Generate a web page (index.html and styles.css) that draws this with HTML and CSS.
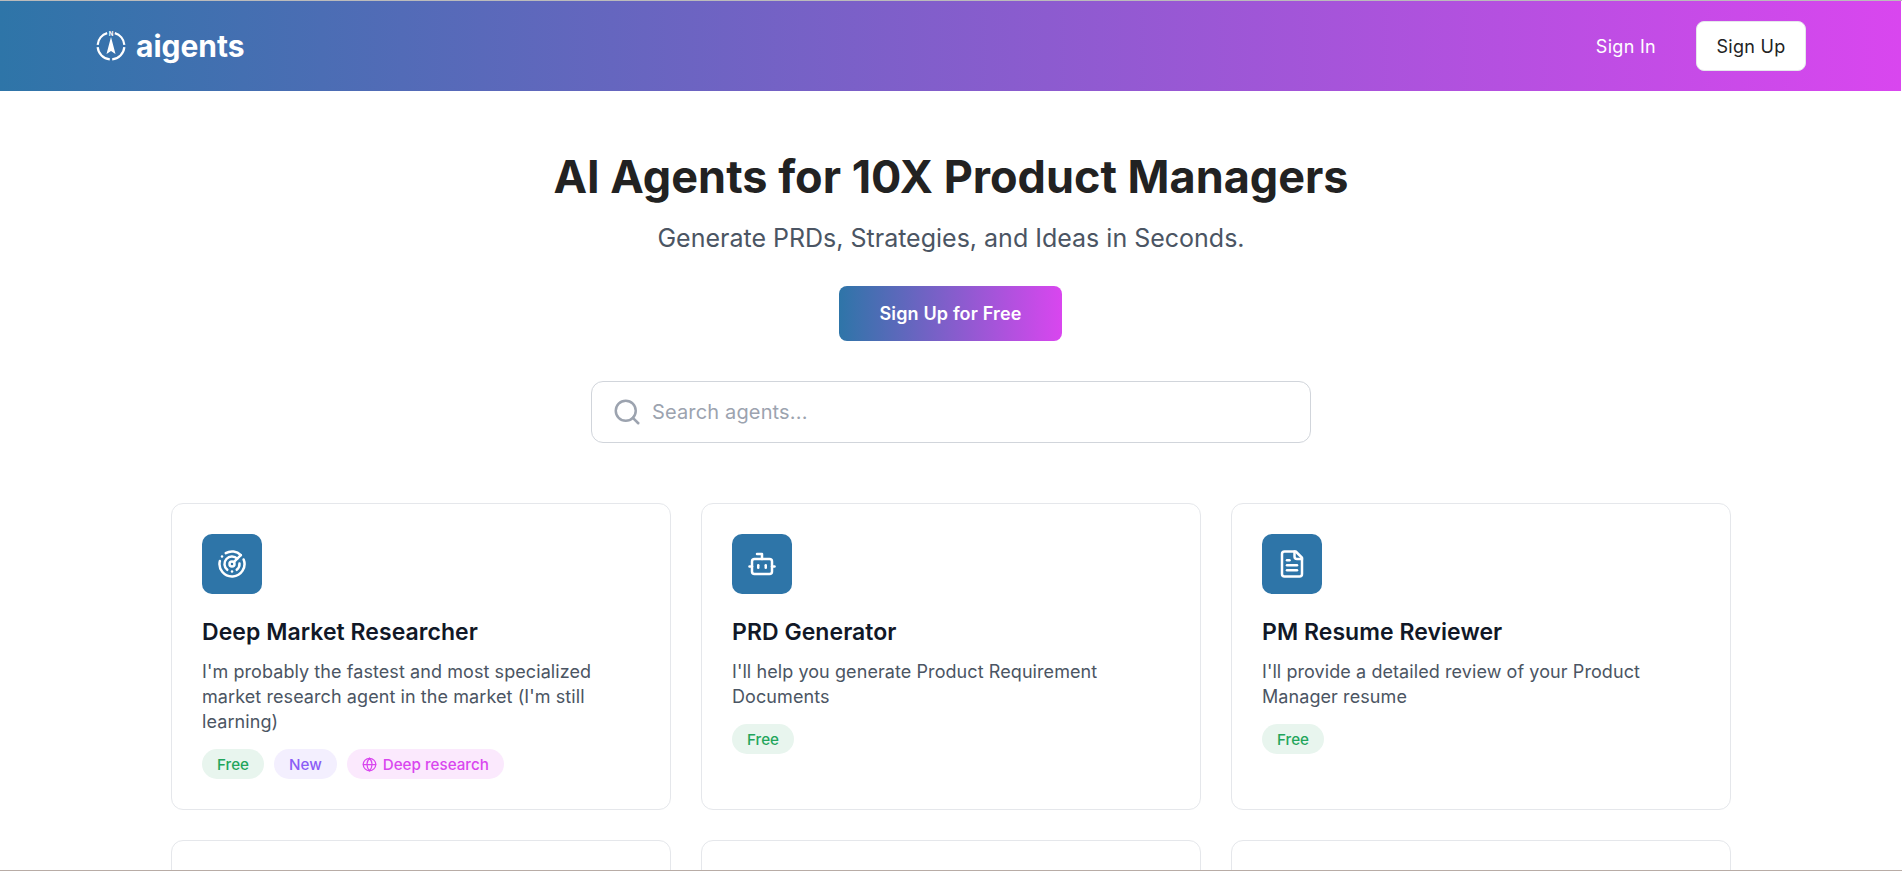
FILE: index.html
```html
<!DOCTYPE html>
<html lang="en">
<head>
  <meta charset="UTF-8" />
  <meta name="viewport" content="width=device-width, initial-scale=1.0"/>
  <title>aigents</title>
  <link rel="stylesheet" href="styles.css">
</head>
<body>
  <header class="topbar">
    <a class="brand" href="#">
      <svg class="brand-icon" viewBox="0 0 30 30" fill="none" stroke="currentColor" stroke-width="2.2">
        <path d="M18.8 2.15A13.4 13.4 0 0 1 28.35 13.8"/>
        <path d="M28.35 16.2A13.4 13.4 0 0 1 16.2 28.35"/>
        <path d="M13.8 28.35A13.4 13.4 0 0 1 1.65 16.2"/>
        <path d="M1.65 13.8A13.4 13.4 0 0 1 11.2 2.15"/>
        <path d="M15 6L19.5 23L15 20L10.5 23Z" fill="currentColor" stroke="none"/>
        <text class="brand-n" x="15" y="4.6">N</text>
      </svg>
      <span>aigents</span>
    </a>
    <nav class="topbar-nav">
      <a class="signin" href="#">Sign In</a>
      <a class="signup" href="#">Sign Up</a>
    </nav>
  </header>

  <section class="hero">
    <h1>AI Agents for 10X Product Managers</h1>
    <p>Generate PRDs, Strategies, and Ideas in Seconds.</p>
    <a class="cta" href="#">Sign Up for Free</a>
    <div class="search">
      <svg class="search-icon" viewBox="0 0 24 24" fill="none" stroke="currentColor" stroke-width="2" stroke-linecap="round" stroke-linejoin="round">
        <circle cx="11" cy="11" r="8"/>
        <path d="m21 21-4.3-4.3"/>
      </svg>
      <input type="text" placeholder="Search agents..."/>
    </div>
  </section>

  <main class="grid">
    <article class="card">
      <div class="card-icon">
        <svg viewBox="0 0 24 24" fill="none" stroke="currentColor" stroke-width="2" stroke-linecap="round" stroke-linejoin="round">
          <path d="M19.07 4.93A10 10 0 0 0 6.99 3.34"/>
          <path d="M4 6h.01"/>
          <path d="M2.29 9.62A10 10 0 1 0 21.31 8.35"/>
          <path d="M16.24 7.76A6 6 0 1 0 8.23 16.67"/>
          <path d="M12 18h.01"/>
          <path d="M17.99 11.66A6 6 0 0 1 15.77 16.67"/>
          <circle cx="12" cy="12" r="2"/>
          <path d="m13.41 10.59 5.66-5.66"/>
        </svg>
      </div>
      <h3>Deep Market Researcher</h3>
      <p>I'm probably the fastest and most specialized market research agent in the market (I'm still learning)</p>
      <div class="tags">
        <span class="tag tag-free">Free</span>
        <span class="tag tag-new">New</span>
        <span class="tag tag-deep">
          <svg viewBox="0 0 24 24" fill="none" stroke="currentColor" stroke-width="2" stroke-linecap="round" stroke-linejoin="round">
            <circle cx="12" cy="12" r="10"/>
            <path d="M12 2a14.5 14.5 0 0 0 0 20 14.5 14.5 0 0 0 0-20"/>
            <path d="M2 12h20"/>
          </svg>
          Deep research
        </span>
      </div>
    </article>

    <article class="card">
      <div class="card-icon">
        <svg viewBox="0 0 24 24" fill="none" stroke="currentColor" stroke-width="2" stroke-linecap="round" stroke-linejoin="round">
          <path d="M12 8V4H8"/>
          <rect x="4" y="8" width="16" height="12" rx="2"/>
          <path d="M2 14h2"/>
          <path d="M20 14h2"/>
          <path d="M15 13v2"/>
          <path d="M9 13v2"/>
        </svg>
      </div>
      <h3>PRD Generator</h3>
      <p>I'll help you generate Product Requirement Documents</p>
      <div class="tags">
        <span class="tag tag-free">Free</span>
      </div>
    </article>

    <article class="card">
      <div class="card-icon">
        <svg viewBox="0 0 24 24" fill="none" stroke="currentColor" stroke-width="2" stroke-linecap="round" stroke-linejoin="round">
          <path d="M15 2H6a2 2 0 0 0-2 2v16a2 2 0 0 0 2 2h12a2 2 0 0 0 2-2V7Z"/>
          <path d="M14 2v4a2 2 0 0 0 2 2h4"/>
          <path d="M10 9H8"/>
          <path d="M16 13H8"/>
          <path d="M16 17H8"/>
        </svg>
      </div>
      <h3>PM Resume Reviewer</h3>
      <p>I'll provide a detailed review of your Product Manager resume</p>
      <div class="tags">
        <span class="tag tag-free">Free</span>
      </div>
    </article>

    <article class="card card-empty"></article>
    <article class="card card-empty"></article>
    <article class="card card-empty"></article>
  </main>

  <div class="window-edge"></div>
</body>
</html>
```
FILE: styles.css
```css
html { overflow: hidden; }
body {
  font-family: Inter, "Liberation Sans", sans-serif;
  margin: 0;
  padding: 0;
  background: #fff;
  color: #222;
  border-top: 1px solid #bbb;
}
a { text-decoration: none; }

.topbar {
  display: flex;
  align-items: center;
  justify-content: space-between;
  height: 90px;
  padding: 0 95px 0 96px;
  margin-right: 1px;
  background: linear-gradient(90deg, #2e75a8, #d946ef);
}
.brand {
  display: flex;
  align-items: center;
  gap: 10px;
  color: #fff;
  font-size: 30px;
  font-weight: 700;
}
.brand-icon { width: 30px; height: 30px; }
.brand-n {
  font-size: 6px;
  font-weight: 700;
  text-anchor: middle;
  fill: currentColor;
  stroke: none;
}
.topbar-nav {
  display: flex;
  align-items: center;
  gap: 40px;
  font-size: 18px;
  letter-spacing: 0.3px;
}
.signin { color: #fff; }
.signup {
  display: flex;
  align-items: center;
  justify-content: center;
  width: 110px;
  height: 50px;
  box-sizing: border-box;
  background: #fff;
  color: #222;
  border: 1px solid #e5e7eb;
  border-radius: 8px;
}

.hero {
  display: flex;
  flex-direction: column;
  align-items: center;
  padding-top: 57px;
}
.hero h1 {
  margin: 0;
  font-size: 45px;
  line-height: 58px;
  font-weight: 700;
  color: #222;
}
.hero p {
  margin: 18px 0 0;
  font-size: 25px;
  line-height: 29px;
  color: #4b5563;
}
.cta {
  display: flex;
  align-items: center;
  justify-content: center;
  width: 223px;
  height: 55px;
  margin: 33px 1px 0 0;
  background: linear-gradient(90deg, #2e75a8, #d946ef);
  color: #fff;
  font-size: 18px;
  font-weight: 600;
  letter-spacing: 0.15px;
  border-radius: 8px;
}
.search {
  display: flex;
  align-items: center;
  gap: 10px;
  width: 720px;
  height: 62px;
  box-sizing: border-box;
  margin-top: 40px;
  padding: 0 20px;
  border: 1px solid #d1d5db;
  border-radius: 12px;
}
.search-icon { width: 30px; height: 30px; color: #9ca3af; flex: none; }
.search input {
  flex: 1;
  border: none;
  outline: none;
  padding: 0;
  font: inherit;
  font-size: 20px;
  letter-spacing: 0.15px;
  color: #222;
}
.search input::placeholder { color: #9ca3af; opacity: 1; }

.grid {
  display: grid;
  grid-template-columns: repeat(3, 500px);
  gap: 30px;
  justify-content: center;
  margin-top: 60px;
}
.card {
  box-sizing: border-box;
  min-height: 307px;
  padding: 30px;
  border: 1px solid #e5e7eb;
  border-radius: 12px;
  background: #fff;
}
.card-icon {
  display: flex;
  align-items: center;
  justify-content: center;
  width: 60px;
  height: 60px;
  background: #2e75a8;
  border-radius: 10px;
  color: #fff;
}
.card-icon svg { width: 30px; height: 30px; }
.card h3 {
  margin: 24px 0 0;
  font-size: 23px;
  line-height: 29px;
  font-weight: 600;
  letter-spacing: 0.05px;
  color: #111827;
}
.card p {
  margin: 12px 0 0;
  font-size: 18px;
  line-height: 25px;
  letter-spacing: 0.08px;
  color: #4b5563;
}
.tags {
  display: flex;
  gap: 10px;
  margin-top: 15px;
}
.tag {
  display: flex;
  align-items: center;
  gap: 6px;
  height: 30px;
  padding: 0 15px;
  border-radius: 15px;
  font-size: 15.2px;
  font-weight: 500;
  line-height: 29px;
}
.tag svg { width: 15px; height: 15px; }
.tag-free { background: #e8f5ee; color: #22a55b; }
.tag-new { background: #f3effe; color: #8b5cf6; }
.tag-deep { background: #fbe9fd; color: #d946ef; }

.window-edge {
  position: fixed;
  left: 0;
  right: 0;
  bottom: 0;
  height: 1px;
  background: #b8aca6;
}
```
